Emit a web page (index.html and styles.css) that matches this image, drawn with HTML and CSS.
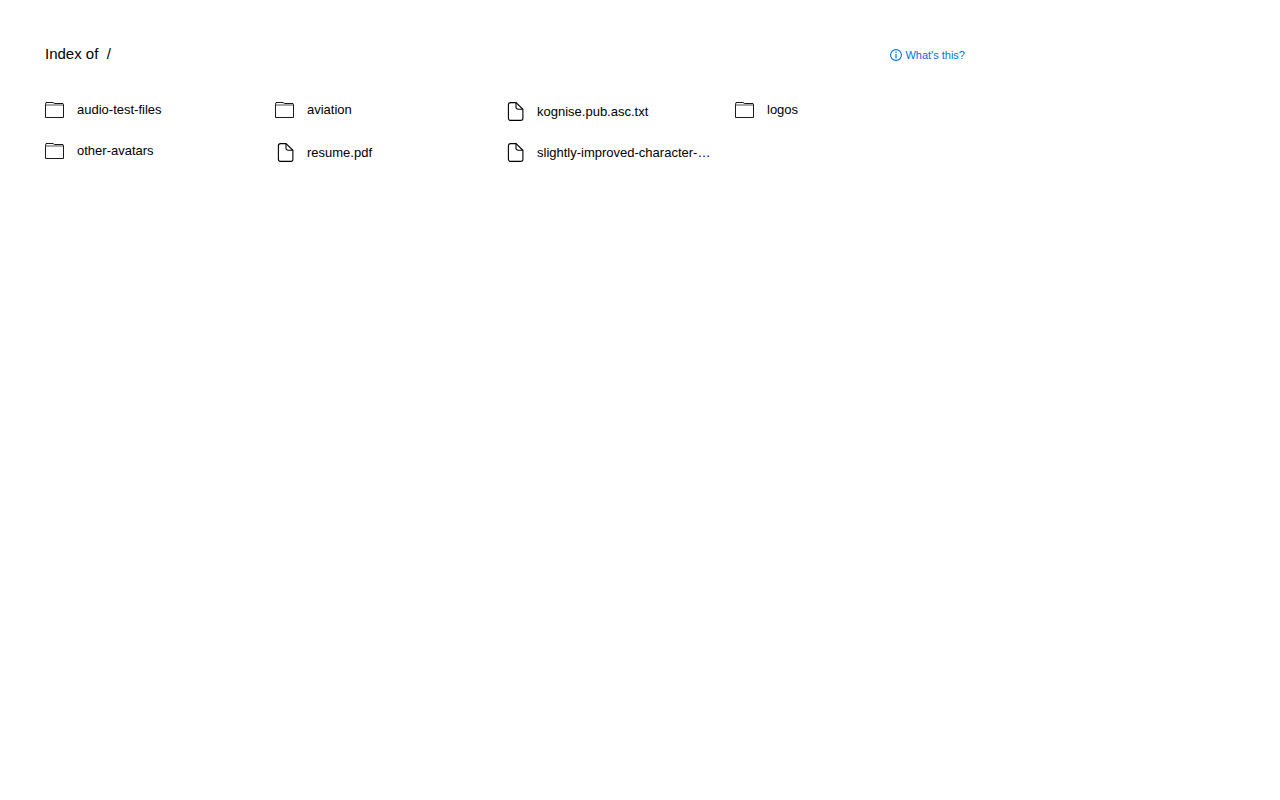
FILE: index.html
```html
<!DOCTYPE html>
<html lang="en">
<head>
    <meta charset="UTF-8"/>
    <title>Index of /</title>
    <link rel="stylesheet" href="styles.css">
</head>
<body>
<div class="page">
    <!-- heading -->
    <div class="header">
        <div class="title">Index of&nbsp; /</div>
        <a class="help" href="#">
            <svg class="help-icon" viewBox="0 0 12 12" width="12" height="12">
                <circle cx="6" cy="6" r="5.4" fill="none" stroke="currentColor" stroke-width="1.1"/>
                <rect x="5.4" y="2.6" width="1.2" height="1.3" fill="currentColor"/>
                <rect x="5.4" y="4.9" width="1.2" height="4.5" fill="currentColor"/>
            </svg>
            What's this?
        </a>
    </div>

    <!-- listing -->
    <div class="listing">
        <a class="item" href="#">
            <svg class="icon" viewBox="0 0 20 17" width="20" height="17"><use href="#folder"/></svg>
            <span class="name">audio-test-files</span>
        </a>
        <a class="item" href="#">
            <svg class="icon" viewBox="0 0 20 17" width="20" height="17"><use href="#folder"/></svg>
            <span class="name">aviation</span>
        </a>
        <a class="item file" href="#">
            <svg class="icon" viewBox="0 0 20 20" width="20" height="20"><use href="#file"/></svg>
            <span class="name">kognise.pub.asc.txt</span>
        </a>
        <a class="item" href="#">
            <svg class="icon" viewBox="0 0 20 17" width="20" height="17"><use href="#folder"/></svg>
            <span class="name">logos</span>
        </a>
        <a class="item" href="#">
            <svg class="icon" viewBox="0 0 20 17" width="20" height="17"><use href="#folder"/></svg>
            <span class="name">other-avatars</span>
        </a>
        <a class="item file" href="#">
            <svg class="icon" viewBox="0 0 20 20" width="20" height="20"><use href="#file"/></svg>
            <span class="name">resume.pdf</span>
        </a>
        <a class="item file" href="#">
            <svg class="icon" viewBox="0 0 20 20" width="20" height="20"><use href="#file"/></svg>
            <span class="name">slightly-improved-character-…</span>
        </a>
    </div>
</div>

<svg class="defs" width="0" height="0">
    <symbol id="folder" viewBox="0 0 20 17">
        <path d="M.5 16.5V3.5L1 1.5h7L9.5 2.5h8.5l.5 1v13z" fill="none" stroke="#000" stroke-width=".9"/>
        <path d="M.5 4h18" fill="none" stroke="#000" stroke-width=".7"/>
    </symbol>
    <symbol id="file" viewBox="0 0 20 20">
        <path d="M5.5 1.6h5.5l6.9 6.7v9a2.1 2.1 0 0 1-2.1 2.1H5.5a2.1 2.1 0 0 1-2.1-2.1V3.7a2.1 2.1 0 0 1 2.1-2.1z" fill="none" stroke="#000" stroke-width="1.1"/>
        <path d="M11 1.6v4.6a2.1 2.1 0 0 0 2.1 2.1h4.8" fill="none" stroke="#000" stroke-width="1.1"/>
    </symbol>
</svg>
</body>
</html>
```

FILE: styles.css
```css
body {
    font-family: "Liberation Sans", Arial, sans-serif;
    margin: 0;
    background-color: #fff;
    color: #000;
}

a {
    color: inherit;
    text-decoration: none;
}

.page {
    width: 920px;
    padding: 45px 0 0 45px;
}

.header {
    display: flex;
    justify-content: space-between;
    align-items: center;
    height: 17px;
}

.title {
    font-size: 15px;
    line-height: 17px;
}

.help {
    display: flex;
    align-items: center;
    gap: 3px;
    font-size: 11px;
    color: #0070f3;
    margin-top: 3px;
}

.listing {
    display: grid;
    grid-template-columns: repeat(4, 230px);
    align-items: start;
    row-gap: 18px;
    margin-top: 38px;
}

.item {
    display: flex;
    align-items: center;
    gap: 12px;
    height: 19px;
    font-size: 13px;
}

.item.file {
    height: 23px;
}

.item.file .icon {
    margin-bottom: 1px;
}

.icon {
    flex-shrink: 0;
}

.name {
    white-space: nowrap;
}

.defs {
    position: absolute;
}
```
